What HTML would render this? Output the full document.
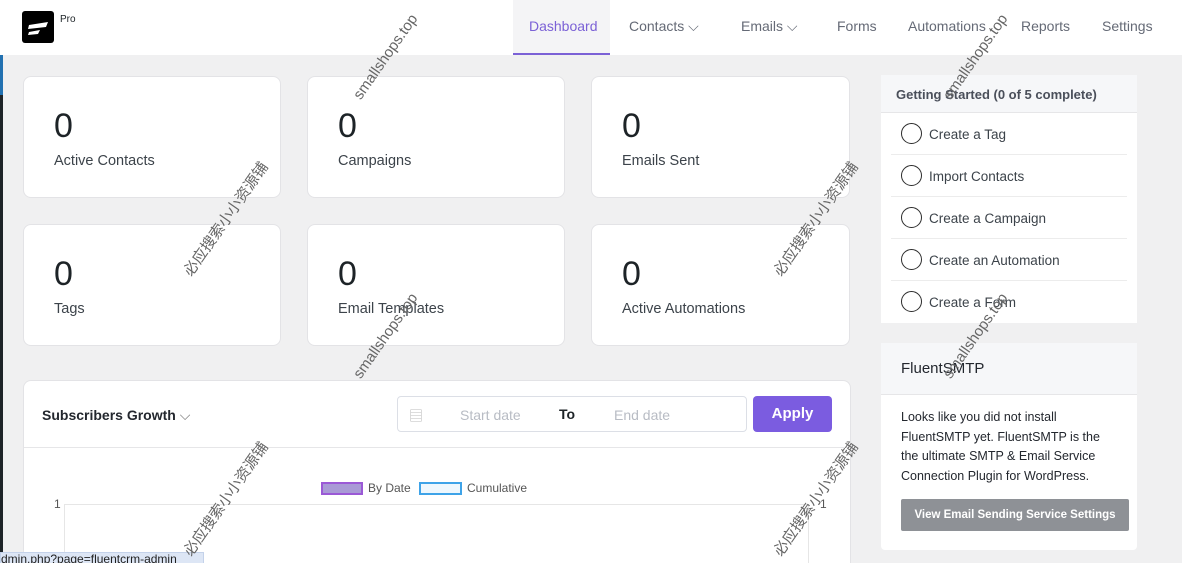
<!DOCTYPE html>
<html style="width:1182px;height:563px;overflow:hidden"><head><meta charset="utf-8"><style>
*{box-sizing:border-box;margin:0;padding:0}
body{width:1182px;height:563px;overflow:hidden;background:#f0f0f1;font-family:"Liberation Sans","Noto Sans CJK SC",sans-serif;color:#1d2327;position:relative}
.hdr{position:absolute;left:0;top:0;width:1182px;height:55px;background:#fff}
.logo{position:absolute;left:22px;top:11px;width:32px;height:32px;background:#000;border-radius:3px}
.pro{position:absolute;left:60px;top:14px;font-size:10px}
.nav{position:absolute;top:18px;font-size:14px;color:#656a76}
.tab{position:absolute;left:513px;top:0;width:97px;height:55px;background:#f4f4f6;border-bottom:2px solid #7b61d6}
.card{position:absolute;background:#fff;border:1px solid #e3e3e6;border-radius:8px}
.num{position:absolute;left:30px;top:30px;font-size:34px;color:#1d2327}
.lbl{position:absolute;left:30px;top:76px;font-size:14.5px;color:#3c434a}
.gs{position:absolute;left:881px;top:75px;width:256px;height:248px;background:#fff}
.gsh{height:38px;background:#f6f7f9;border-bottom:1px solid #e6e6e8;font-size:13px;font-weight:bold;color:#4a4f5a;padding:12px 15px}
.it{height:42px;margin:0 10px;border-bottom:1px solid #ececec;font-size:13.5px;color:#3c434a;padding:14px 0 0 38px;position:relative}
.it:before{content:"";position:absolute;left:10px;top:10px;width:19px;height:19px;border:1.5px solid #2c2c2c;border-radius:50%}
.sm{position:absolute;left:881px;top:343px;width:256px;height:207px;background:#fff;border-radius:4px}
.wm{position:absolute;font-size:15px;color:#666;transform:rotate(-55deg);transform-origin:left top;white-space:nowrap}
</style></head><body>
<div style="position:absolute;left:0;top:0;width:3px;height:563px;background:#1d2327"></div>
<div class="hdr">
<div class="logo"><svg width="32" height="32"><path d="M7 14 L26 11 L24 16 L6 18Z M7 21 L18 19 L16 23 L6 24Z" fill="#fff"/></svg></div>
<div class="pro">Pro</div>
<div class="tab"></div>
<div class="nav" style="left:529px;color:#7b61d6;">Dashboard</div>
<div class="nav" style="left:629px">Contacts ⌵</div>
<div class="nav" style="left:741px">Emails ⌵</div>
<div class="nav" style="left:837px">Forms</div>
<div class="nav" style="left:908px">Automations</div>
<div class="nav" style="left:1021px">Reports</div>
<div class="nav" style="left:1102px">Settings</div>
</div>
<div style="position:absolute;left:0;top:55px;width:3px;height:40px;background:#2271b1"></div>

<div class="card" style="left:23px;top:76px;width:258px;height:122px"><div class="num">0</div><div class="lbl">Active Contacts</div></div>
<div class="card" style="left:307px;top:76px;width:258px;height:122px"><div class="num">0</div><div class="lbl">Campaigns</div></div>
<div class="card" style="left:591px;top:76px;width:259px;height:122px"><div class="num">0</div><div class="lbl">Emails Sent</div></div>
<div class="card" style="left:23px;top:224px;width:258px;height:122px"><div class="num">0</div><div class="lbl">Tags</div></div>
<div class="card" style="left:307px;top:224px;width:258px;height:122px"><div class="num">0</div><div class="lbl">Email Templates</div></div>
<div class="card" style="left:591px;top:224px;width:259px;height:122px"><div class="num">0</div><div class="lbl">Active Automations</div></div>

<div class="card" style="left:23px;top:380px;width:828px;height:183px;border-bottom:none;border-radius:8px 8px 0 0;overflow:hidden">
 <div style="position:absolute;left:0;top:66px;width:100%;border-top:1px solid #e6e6e8"></div>
 <div style="position:absolute;left:18px;top:26px;font-size:14px;font-weight:bold;color:#23272e">Subscribers Growth <span style="font-weight:normal;color:#777">⌵</span></div>
 <div style="position:absolute;left:373px;top:15px;width:350px;height:36px;border:1px solid #dcdfe6;border-radius:4px;font-size:14px">
  <span style="position:absolute;left:11px;top:9px;color:#bbb">▤</span>
  <span style="position:absolute;left:62px;top:10px;color:#b8bcc4">Start date</span>
  <span style="position:absolute;left:161px;top:9px;font-weight:bold">To</span>
  <span style="position:absolute;left:216px;top:10px;color:#b8bcc4">End date</span></div>
 <div style="position:absolute;left:729px;top:15px;width:79px;height:36px;background:#7b5ce0;border-radius:4px;color:#fff;font-weight:bold;font-size:15px;text-align:center;line-height:36px">Apply</div>
 <div style="position:absolute;left:297px;top:101px;width:42px;height:13px;background:#a99ad6;border:2px solid #9b59d6"></div>
 <span style="position:absolute;left:344px;top:100px;font-size:12px;color:#555">By Date</span>
 <div style="position:absolute;left:395px;top:101px;width:43px;height:13px;background:#eef7fd;border:2px solid #3ea3e8"></div>
 <span style="position:absolute;left:443px;top:100px;font-size:12px;color:#555">Cumulative</span>
 <span style="position:absolute;left:30px;top:116px;font-size:12px;color:#555">1</span>
 <span style="position:absolute;left:796px;top:116px;font-size:12px;color:#555">1</span>
 <div style="position:absolute;left:40px;top:123px;width:745px;height:100px;border-top:1px solid #e6e6e6;border-left:1px solid #e6e6e6;border-right:1px solid #e6e6e6"></div>
</div>

<div class="gs"><div class="gsh">Getting Started (0 of 5 complete)</div>
<div class="it">Create a Tag</div><div class="it">Import Contacts</div><div class="it">Create a Campaign</div><div class="it">Create an Automation</div><div class="it" style="border:none">Create a Form</div></div>

<div class="sm"><div style="height:52px;background:#f6f7f9;border-bottom:1px solid #e6e6e8;padding:17px 20px;font-size:15px;color:#23272e">FluentSMTP</div>
<div style="padding:13px 20px 0;font-size:12.5px;line-height:19.5px;color:#23272e">Looks like you did not install FluentSMTP yet. FluentSMTP is the the ultimate SMTP &amp; Email Service Connection Plugin for WordPress.</div>
<div style="position:absolute;left:20px;top:156px;width:228px;height:32px;background:#8e9196;color:#fff;font-size:11.5px;font-weight:bold;text-align:center;line-height:32px;border-radius:2px">View Email Sending Service Settings</div></div>

<div style="position:absolute;left:0;top:552px;width:204px;height:11px;background:#dde6f5;border:1px solid #c4d2ea;border-bottom:none;font-size:12px;line-height:12px;color:#222;overflow:hidden;white-space:nowrap">dmin.php?page=fluentcrm-admin</div>

<div class="wm" style="left:350px;top:93px">smallshops.top</div>
<div class="wm" style="left:940px;top:93px">smallshops.top</div>
<div class="wm" style="left:350px;top:372px">smallshops.top</div>
<div class="wm" style="left:940px;top:372px">smallshops.top</div>
<div class="wm" style="left:178px;top:268px">必应搜索小小资源铺</div>
<div class="wm" style="left:768px;top:268px">必应搜索小小资源铺</div>
<div class="wm" style="left:178px;top:548px">必应搜索小小资源铺</div>
<div class="wm" style="left:768px;top:548px">必应搜索小小资源铺</div>
</body></html>
